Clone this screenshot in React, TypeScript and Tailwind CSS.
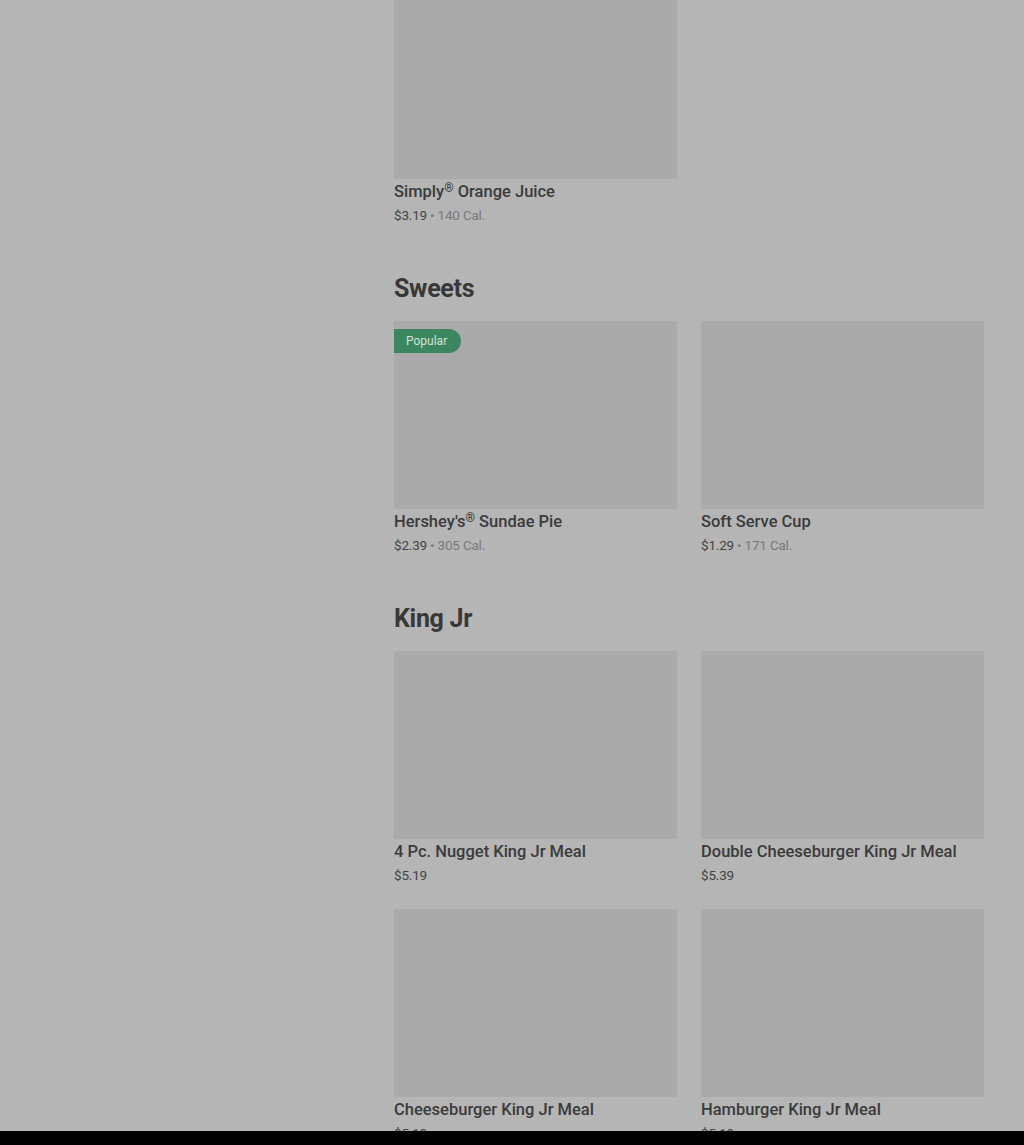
import React from "react"

type Item = { name: string; price: string; cal?: string; popular?: boolean; imgH?: string }

const sections: { title?: string; items: Item[] }[] = [
  { items: [{ name: "Simply® Orange Juice", price: "$3.19", cal: "140 Cal.", imgH: "h-[179px]" }] },
  {
    title: "Sweets",
    items: [
      { name: "Hershey's® Sundae Pie", price: "$2.39", cal: "305 Cal.", popular: true },
      { name: "Soft Serve Cup", price: "$1.29", cal: "171 Cal." },
    ],
  },
  {
    title: "King Jr",
    items: [
      { name: "4 Pc. Nugget King Jr Meal", price: "$5.19" },
      { name: "Double Cheeseburger King Jr Meal", price: "$5.39" },
      { name: "Cheeseburger King Jr Meal", price: "$5.19" },
      { name: "Hamburger King Jr Meal", price: "$5.19" },
    ],
  },
]

// raise the ® mark like the original menu does
function Name({ text }: { text: string }) {
  const parts = text.split("®")
  return (
    <>
      {parts.map((p, i) => (
        <React.Fragment key={i}>
          {p}
          {i < parts.length - 1 && <span className="align-[5px] text-[12px] leading-none">®</span>}
        </React.Fragment>
      ))}
    </>
  )
}

function Card({ item }: { item: Item }) {
  return (
    <div>
      <div className={`relative w-full bg-[#aaaaaa] ${item.imgH ?? "h-[188px]"}`}>
        {item.popular && (
          <span className="absolute left-0 top-2 flex h-6 items-center rounded-r-full bg-[#3d8760] pl-3 pr-[14px] text-[12px] text-[#cfe2d5]">
            Popular
          </span>
        )}
      </div>
      <h3 className="mt-px whitespace-nowrap text-[16.5px] font-medium leading-6 text-[#3b3b3b]">
        <Name text={item.name} />
      </h3>
      <p className="whitespace-nowrap text-[13.5px] leading-[22px] tracking-[-0.2px] text-[#444444]">
        {item.price}
        {item.cal && <span className="text-[#7a7a7a]"> • {item.cal}</span>}
      </p>
    </div>
  )
}

export default function App() {
  return (
    <div
      className="flex h-[1145px] flex-col overflow-hidden bg-[#b5b5b5]"
      style={{ fontFamily: "Roboto, 'Liberation Sans', sans-serif" }}
    >
      <div className="flex flex-1 overflow-hidden">
        <aside className="w-[394px] shrink-0" />
        <main className="w-[590px] space-y-[46px]">
          {sections.map((s, i) => (
            <section key={i}>
              {s.title && (
                <h2 className="mb-[17px] pt-px text-[25px] font-bold leading-[31px] tracking-[-0.3px] text-[#383838]">
                  {s.title}
                </h2>
              )}
              <div className="grid grid-cols-2 gap-x-6 gap-y-[23px]">
                {s.items.map((item) => (
                  <Card key={item.name} item={item} />
                ))}
              </div>
            </section>
          ))}
        </main>
      </div>
      <div className="h-[14px] shrink-0 bg-black" />
    </div>
  )
}
